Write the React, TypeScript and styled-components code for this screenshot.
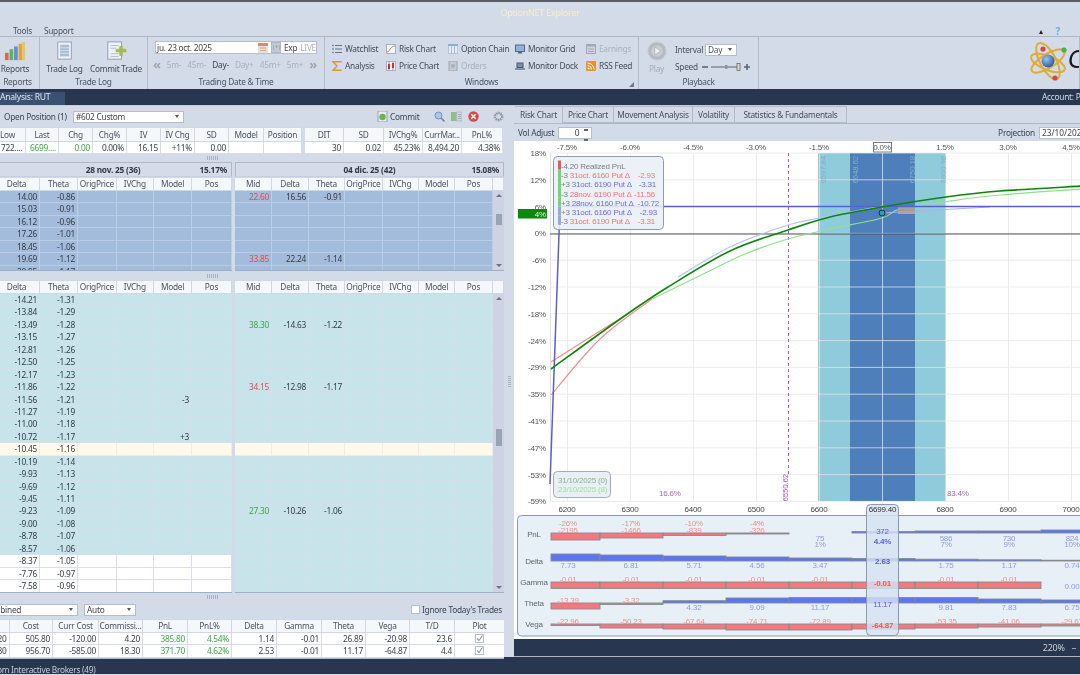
import React from "react";
import styled, { createGlobalStyle } from "styled-components";

const GlobalStyle = createGlobalStyle`
  html, body { margin: 0; padding: 0; background: #d3dae8; overflow: hidden; }
  #root { width: 1080px; height: 675px; }
  * { box-sizing: border-box; }
`;

const Frame = styled.div`
  width: 1080px; height: 675px; overflow: hidden; display: flex; flex-direction: column;
  background: #d3dae8; color: #3d4451; font: 8.3px "Noto Sans", sans-serif; letter-spacing: -0.25px; filter: blur(0.35px);
`;
const TopLine = styled.div`height: 2px; background: #5a5d66;`;
const TitleBar = styled.div`height: 23px; display: flex; align-items: center; justify-content: center; color: #f6eecb; font-size: 9px; padding-bottom: 3px;`;
const MenuBar = styled.div`height: 11px; display: flex; align-items: center; padding-left: 13px; gap: 12px; color: #4a5160;`;
const MenuRight = styled.div`margin-left: auto; display: flex; align-items: center; gap: 13px; padding-right: 20px; color: #222;`;
const Help = styled.span`color: #6fb0d8; font-weight: 700; font-size: 10px;`;
const Ribbon = styled.div`height: 53px; display: flex; border-top: 1px solid #aeb7c6;`;
const Group = styled.div<{ $w?: number }>`
  ${(p) => (p.$w ? `width: ${p.$w}px; flex: none;` : "flex: 1; min-width: 0; overflow: hidden;")}
  display: grid; grid-template-rows: 1fr 14px; border-right: 1px solid #b3bbca; position: relative;
`;
const GroupLabel = styled.div<{ $shift?: number }>`
  text-align: center; line-height: 11px; padding-top: 1px; color: #4c5361; margin-left: ${(p) => p.$shift ?? 0}px;
`;
const Bigs = styled.div<{ $shift?: number }>`display: flex; padding-top: 4px; margin-left: ${(p) => p.$shift ?? 0}px;`;
const Big = styled.div<{ $w: number; $off?: boolean }>`
  width: ${(p) => p.$w}px; display: flex; flex-direction: column; align-items: center; height: 34px;
  color: ${(p) => (p.$off ? "#a3aab7" : "#454c5a")};
  svg { height: 20px; }
  span { margin-top: 2px; white-space: nowrap; line-height: 11px; }
`;
const DateCol = styled.div`padding: 4px 7px 0 5px; display: flex; flex-direction: column; gap: 4px;`;
const DateInput = styled.div`
  height: 13px; margin-left: 2px; background: #fff; border: 1px solid #b6bfce; display: flex; align-items: center;
  padding-left: 1px; color: #444; gap: 3px;
`;
const DateText = styled.span`flex: 1;`;
const Muted = styled.span`color: #a9b1bf;`;
const StepBtn = styled.span`width: 10px; height: 11px; background: #c3c9d5; border: 1px solid #b0b7c5; color: #8a92a0; font-size: 6px; text-align: center; line-height: 9px;`;
const Steps = styled.div`display: flex; justify-content: space-between; align-items: center; height: 13px; color: #a9b1bf;`;
const Arrow = styled.span`font-size: 13px; color: #a3a7ad; font-weight: 700; line-height: 11px;`;
const Cur = styled.span`color: #3d4451;`;
const WinGrid = styled.div`
  padding: 3px 0 0 7px; display: grid; grid-template-columns: 54px 62px 67px 71px 1fr; grid-auto-rows: 17px; align-items: center;
`;
const WinItem = styled.div<{ $off?: boolean }>`
  display: flex; align-items: center; gap: 3px; color: ${(p) => (p.$off ? "#a9b1bf" : "#454c5a")}; white-space: nowrap;
  svg { width: 10px; height: 10px; flex: none; }
`;
const Corner = styled.div`position: absolute; right: 4px; bottom: 2px; width: 0; height: 0; border-left: 5px solid transparent; border-bottom: 5px solid #6f7684;`;
const PlayRow = styled.div`display: flex; padding: 4px 0 0 7px; gap: 8px;`;
const PlayCol = styled(Big)`width: 21px;`;
const Ctrls = styled.div`display: flex; flex-direction: column; gap: 4px; padding-top: 2px; color: #4a5160;`;
const CtrlRow = styled.div`display: flex; align-items: center; gap: 2px; height: 13px; white-space: nowrap;`;
const Slide = styled.span`display: flex; align-items: center; width: 50px; margin-left: 2px; svg { width: 50px; height: 10px; }`;
const LogoRow = styled.div`display: flex; margin-left: 269px; padding-top: 3px; align-items: flex-start; height: 50px; grid-row: 1 / span 2;`;
const LogoC = styled.span`font: italic 25px "Liberation Sans", sans-serif; color: #16161e; margin-top: 5px; letter-spacing: 0;`;
const Band = styled.div`height: 17px; background: #28374f; border-bottom: 1px solid #d8d48e; display: flex; color: #d5dae2; align-items: flex-end;`;
const AnaTab = styled.div`height: 13px; width: 65px; background: #3a5171; padding: 0 0 2px 0; line-height: 11px; color: #e0e6ee; font-size: 8.6px;`;
const Account = styled.div`margin-left: auto; height: 14px; width: 38px; white-space: nowrap; overflow: hidden;`;
const Main = styled.div`height: 568px; display: flex;`;
const Left = styled.div`width: 504px; flex: none; display: flex; flex-direction: column; overflow: hidden;`;
const PosBar = styled.div`height: 21px; display: flex; align-items: center; padding-left: 4px; white-space: nowrap; flex: none;`;
const PosLabel = styled.span`width: 64px; flex: none;`;
const Combo = styled.div<{ $w: number; $x?: number }>`
  width: ${(p) => p.$w}px; height: 12px; background: #fff; border: 1px solid #b4bdcc; margin-left: ${(p) => p.$x ?? 0}px; display: flex; align-items: center;
  padding: 0 4px 0 2px; justify-content: space-between; line-height: 10px; flex: none;
  &::after { content: ""; border-left: 2.5px solid transparent; border-right: 2.5px solid transparent; border-top: 3px solid #555; }
`;
const PosTool = styled.div<{ $x: number }>`margin-left: ${(p) => p.$x}px; display: flex; align-items: center; gap: 2px; flex: none; svg { width: 11px; height: 11px; }`;
const TableRow = styled.div`display: flex; gap: 3px; flex: none;`;
const DataTable = styled.div<{ $x?: number; $cols: string; $w: number }>`
  width: ${(p) => p.$w}px; margin-left: ${(p) => p.$x ?? 0}px; border-right: 1px solid #aab5c6;
  display: grid; grid-template-columns: ${(p) => p.$cols}; flex: none;
`;
const HeadCell = styled.div<{ $h?: number }>`
  height: ${(p) => p.$h ?? 15}px; background: #f5f8fb; border: 1px solid #cfd8e4; border-width: 1px 1px 1px 0; text-align: center; line-height: ${(p) => (p.$h ?? 15) - 2}px;
  color: #4c5361; white-space: nowrap; overflow: hidden;
`;
const ValCell = styled.div<{ $c?: string; $left?: boolean; $h?: number }>`
  height: ${(p) => p.$h ?? 12}px; background: #fff; border: 1px solid #d5dce6; border-width: 0 1px 1px 0; text-align: ${(p) => (p.$left ? "left" : "right")};
  line-height: ${(p) => (p.$h ?? 12) - 1}px; padding: 0 2px 0 ${(p) => (p.$left ? 11 : 0)}px; color: ${(p) => p.$c ?? "#3a3f49"}; white-space: nowrap; overflow: hidden;
`;
const Split = styled.div<{ $h: number }>`height: ${(p) => p.$h}px; display: flex; align-items: center; flex: none; padding-left: 207px;`;
const Grip = styled.i`display: block; width: 11px; height: 4px; background: repeating-linear-gradient(90deg, #aab2c1 0 1px, transparent 1px 2px);`;
const Halves = styled.div`display: flex; gap: 3px; flex: none;`;
const Half = styled.div<{ $w: number; $x?: number }>`width: ${(p) => p.$w}px; margin-left: ${(p) => p.$x ?? 0}px; flex: none; display: flex; flex-direction: column;`;
const Expiry = styled.div`
  height: 15px; background: #d5dbe8; border: 1px solid #aeb8c8; border-bottom-color: #c8d0dd; display: flex; justify-content: center; align-items: center; font-weight: 700; color: #333843; position: relative; letter-spacing: -0.2px;
`;
const ExpPct = styled.span`position: absolute; right: 4px;`;
const GridHead = styled.div<{ $cols: string }>`display: grid; grid-template-columns: ${(p) => p.$cols};`;
const GridBody = styled.div<{ $h: number }>`display: flex; height: ${(p) => p.$h}px; overflow: hidden; border-bottom: 1px solid #9fb0c6;`;
const RowsCol = styled.div`flex: 1; min-width: 0;`;
const GridRow = styled.div<{ $cols: string; $bg: string; $line: string }>`
  display: grid; grid-template-columns: ${(p) => p.$cols}; height: 12.45px; background: ${(p) => p.$bg};
  & > div { border-right: 1px solid ${(p) => p.$line}; border-bottom: 1px solid ${(p) => p.$line}; text-align: right; padding-right: 2px; line-height: 11.5px; color: #353a44; white-space: nowrap; overflow: hidden; }
`;
const RowCell = styled.div<{ $c?: string }>`${(p) => (p.$c ? `color: ${p.$c} !important;` : "")}`;
const Scroll = styled.div`width: 11px; background: #cdd3e2; display: flex; flex-direction: column; align-items: center; padding: 3px 0;`;
const ArrowUp = styled.i`border-left: 3px solid transparent; border-right: 3px solid transparent; border-bottom: 3px solid #6b7280; display: block;`;
const ArrowDown = styled.i`margin-top: auto; border-left: 3px solid transparent; border-right: 3px solid transparent; border-top: 3px solid #6b7280; display: block;`;
const Thumb = styled.i<{ $y: number; $h: number }>`display: block; width: 6px; height: ${(p) => p.$h}px; margin-top: ${(p) => p.$y}px; background: #9aa3b2;`;
const ToolRow = styled.div`height: 17px; display: flex; align-items: center; flex: none; padding-bottom: 1px; overflow: hidden;`;
const Check = styled.div`width: 9px; height: 9px; background: #fff; border: 1px solid #b4bdcc; margin-left: 275px; flex: none;`;
const CheckText = styled.span`margin-left: 2px; white-space: nowrap;`;
const PlotCell = styled(ValCell)`display: flex; align-items: center; justify-content: center; padding: 0; svg { width: 9px; height: 9px; }`;
const SumRule = styled.div`height: 1px; background: #b1bac9; flex: none;`;
const Foot = styled.div`height: 17px; background: #28374f; color: #c8ced8; flex: none; overflow: hidden; line-height: 21px; white-space: nowrap; margin-top: auto;`;
const FootText = styled.span`display: inline-block; margin-left: -28px;`;
const VSplit = styled.div`width: 10px; flex: none; display: flex; flex-direction: column; align-items: center;`;
const VMid = styled.div`flex: 1; display: flex; align-items: center;`;
const VGrip = styled.i`display: block; width: 3px; height: 11px; background: repeating-linear-gradient(0deg, #aab2c1 0 1px, transparent 1px 2px);`;
const FootFill = styled.div`height: 17px; width: 100%; background: #28374f;`;
const Right = styled.div`flex: 1; display: flex; flex-direction: column; overflow: hidden; min-width: 0;`;
const Tabs = styled.div`height: 18px; display: flex; padding-left: 1px; border-bottom: 1px solid #aab5c6; flex: none;`;
const Tab = styled.div<{ $w: number; $on?: boolean }>`
  width: ${(p) => p.$w}px; height: ${(p) => (p.$on ? 18 : 17)}px; border: 1px solid #b1bbca; border-left-width: 0; text-align: center; line-height: 15px; color: #464d5b; white-space: nowrap; background: #d3dae8;
`;
const VolRow = styled.div`height: 17px; display: flex; align-items: center; padding-left: 4px; flex: none; white-space: nowrap;`;
const Spin = styled.div`width: 34px; height: 12px; margin-left: 4px; background: #fff; border: 1px solid #b7c0ce; text-align: right; line-height: 10px; padding-right: 12px; position: relative;
  &::after { content: ""; position: absolute; right: 3px; top: 1px; width: 4px; height: 8px; border-top: 2px solid #666; border-bottom: 2px solid #666; }
`;
const ProjLabel = styled.span`margin-left: auto;`;
const ProjInput = styled.div`width: 60px; height: 12px; margin-left: 4px; margin-right: -19px; background: #fff; border: 1px solid #b7c0ce; line-height: 10px; padding-left: 2px; flex: none; letter-spacing: 0;`;
const ChartSvg = styled.svg`display: block; flex: none; width: 567px; height: 498px; font-family: "Liberation Sans", sans-serif; letter-spacing: -0.2px;`;
const ZoomBar = styled.div`height: 17px; background: #28374f; color: #c9ced7; display: flex; align-items: center; justify-content: flex-end; gap: 7px; padding-right: 4px; flex: none; font-size: 9px; margin-left: -1px;`;
const RFootLine = styled.div`height: 1px; background: #aeb6c2; flex: none;`;

const RED = "#e64a4e";
const GREEN = "#3ea644";
const leftCols = "46px 38px 38.7px 37.3px 38px 40px";
const rightCols = "37px 37px 36px 37.7px 36.3px 36px 38px";
const headNames = ["Delta", "Theta", "OrigPrice", "IVChg", "Model", "Pos"];
const rightHead = ["Mid", "Delta", "Theta", "OrigPrice", "IVChg", "Model", "Pos"];

type Row = { d: string; t: string; model?: string; mid?: string; md?: string; mt?: string; c?: string };
const topRows: Row[] = [
  { d: "14.00", t: "-0.86", mid: "22.60", md: "16.56", mt: "-0.91", c: RED },
  { d: "15.03", t: "-0.91" }, { d: "16.12", t: "-0.96" }, { d: "17.26", t: "-1.01" }, { d: "18.45", t: "-1.06" },
  { d: "19.69", t: "-1.12", mid: "33.85", md: "22.24", mt: "-1.14", c: RED },
  { d: "20.95", t: "-1.17" },
];
const lowRows: Row[] = [
  { d: "-14.21", t: "-1.31" }, { d: "-13.84", t: "-1.29" },
  { d: "-13.49", t: "-1.28", mid: "38.30", md: "-14.63", mt: "-1.22", c: GREEN },
  { d: "-13.15", t: "-1.27" }, { d: "-12.81", t: "-1.26" }, { d: "-12.50", t: "-1.25" }, { d: "-12.17", t: "-1.23" },
  { d: "-11.86", t: "-1.22", mid: "34.15", md: "-12.98", mt: "-1.17", c: RED },
  { d: "-11.56", t: "-1.21", model: "-3" }, { d: "-11.27", t: "-1.19" }, { d: "-11.00", t: "-1.18" },
  { d: "-10.72", t: "-1.17", model: "+3" }, { d: "-10.45", t: "-1.16" }, { d: "-10.19", t: "-1.14" },
  { d: "-9.93", t: "-1.13" }, { d: "-9.69", t: "-1.12" }, { d: "-9.45", t: "-1.11" },
  { d: "-9.23", t: "-1.09", mid: "27.30", md: "-10.26", mt: "-1.06", c: GREEN },
  { d: "-9.00", t: "-1.08" }, { d: "-8.78", t: "-1.07" }, { d: "-8.57", t: "-1.06" },
  { d: "-8.37", t: "-1.05" }, { d: "-7.76", t: "-0.97" }, { d: "-7.58", t: "-0.96" },
];

const cellsLeft = (r: Row) => (
  <>
    <RowCell>{r.d}</RowCell><RowCell>{r.t}</RowCell><RowCell /><RowCell /><RowCell>{r.model}</RowCell><RowCell />
  </>
);
const cellsRight = (r: Row) => (
  <>
    <RowCell $c={r.c}>{r.mid}</RowCell><RowCell>{r.md}</RowCell><RowCell>{r.mt}</RowCell><RowCell /><RowCell /><RowCell /><RowCell />
  </>
);

const lowStyle = (i: number, side: "l" | "r") => {
  if (i === 12) return { bg: "#fff9ec", line: "#f1ece0" };
  if (side === "l" && i > 20) return { bg: "#ffffff", line: "#d9dfea" };
  return { bg: "#c6e4ea", line: "#d3dfe9" };
};

const GridPair = ({ rows, h, kind, thumbY, thumbH, expiry }: { rows: Row[]; h: number; kind: "top" | "low"; thumbY: number; thumbH: number; expiry?: boolean }) => (
  <Halves>
    <Half $w={238} $x={-6}>
      {expiry && <Expiry>28 nov. 25 (36)<ExpPct>15.17%</ExpPct></Expiry>}
      <GridHead $cols={leftCols}>{headNames.map((n) => <HeadCell key={n} $h={14}>{n}</HeadCell>)}</GridHead>
      <GridBody $h={h}>
        <RowsCol>
          {rows.map((r, i) => {
            const s = kind === "top" ? { bg: "#a4bcdc", line: "#bacde4" } : lowStyle(i, "l");
            return <GridRow key={i} $cols={leftCols} $bg={s.bg} $line={s.line}>{cellsLeft(r)}</GridRow>;
          })}
        </RowsCol>
      </GridBody>
    </Half>
    <Half $w={269}>
      {expiry && <Expiry>04 dic. 25 (42)<ExpPct>15.08%</ExpPct></Expiry>}
      <GridHead $cols={rightCols + " 11px"}>
        {rightHead.map((n) => <HeadCell key={n} $h={14}>{n}</HeadCell>)}
        <HeadCell $h={14} />
      </GridHead>
      <GridBody $h={h}>
        <RowsCol>
          {rows.map((r, i) => {
            const s = kind === "top" ? { bg: "#a4bcdc", line: "#bacde4" } : lowStyle(i, "r");
            return <GridRow key={i} $cols={rightCols} $bg={s.bg} $line={s.line}>{cellsRight(r)}</GridRow>;
          })}
        </RowsCol>
        <Scroll><ArrowUp /><Thumb $y={thumbY} $h={thumbH} /><ArrowDown /></Scroll>
      </GridBody>
    </Half>
  </Halves>
);

/* --------- icons ---------- */
const ReportsIcon = () => (
  <svg viewBox="0 0 24 22" width="22">
    <rect x="1" y="13" width="4" height="8" fill="#e2624e" /><rect x="6" y="9" width="4" height="12" fill="#5cb45c" />
    <rect x="11" y="6" width="4" height="15" fill="#5b8fd6" /><rect x="16" y="3" width="4" height="18" fill="#e4a33a" /><rect x="20" y="1" width="3" height="20" fill="#e5c958" />
  </svg>
);
const DocIcon = () => (
  <svg viewBox="0 0 20 22" width="18">
    <rect x="2" y="1" width="15" height="19" fill="#eef2f8" stroke="#8d9ab0" />
    <rect x="4.5" y="4" width="10" height="13" fill="#a9bcd6" /><path d="M4.5 7.5h10M4.5 10.5h10M4.5 13.5h10" stroke="#dbe3ef" />
  </svg>
);
const CommitIcon = () => (
  <svg viewBox="0 0 24 22" width="22">
    <rect x="3" y="1" width="15" height="19" fill="#eef2f8" stroke="#8d9ab0" />
    <path d="M6 5h9M6 8h6M6 14h9M6 17h9" stroke="#a9bcd6" />
    <path d="M12 9h4v-3h3v3h4v3h-4v4h-3v-4h-4z" fill="#9cc24c" stroke="#c2a13a" strokeWidth=".6" />
  </svg>
);
const CalIcon = () => (
  <svg viewBox="0 0 10 10" width="10" height="10" style={{ flex: "none" }}>
    <rect width="10" height="10" fill="#dde3ec" /><rect width="10" height="3" fill="#e28a5a" /><path d="M2 5h6M2 7.5h6" stroke="#e2a27e" />
  </svg>
);
const ListIcon = () => <svg viewBox="0 0 10 10"><path d="M0 1.5h2M0 5h2M0 8.5h2" stroke="#6f9bc8" strokeWidth="1.4" /><path d="M3 1.5h7M3 5h7M3 8.5h7" stroke="#6a7280" /></svg>;
const SigmaIcon = () => <svg viewBox="0 0 10 10"><path d="M9 1.5V.7H1l4 4.3-4 4.3h8v-.9" fill="none" stroke="#d89a35" strokeWidth="1.4" /></svg>;
const RiskIcon = () => <svg viewBox="0 0 10 10"><rect x=".5" y=".5" width="9" height="9" fill="#f3f6fa" stroke="#a8b2c2" /><path d="M1 8C4 8 4 2 9 2" fill="none" stroke="#d08a4a" /></svg>;
const PriceIcon = () => <svg viewBox="0 0 10 10"><rect x=".5" y=".5" width="9" height="9" fill="#f3f6fa" stroke="#a8b2c2" /><rect x="2" y="3" width="2" height="5" fill="#d33" /><rect x="6" y="2" width="2" height="5" fill="#d33" /><path d="M3 1v8M7 1v8" stroke="#933" strokeWidth=".6" /></svg>;
const ChainIcon = () => <svg viewBox="0 0 10 10"><rect x=".5" y=".5" width="9" height="9" fill="#e6edf6" stroke="#b4c4d9" /><path d="M3.5 0v10M6.5 0v10" stroke="#9db8d8" /><rect x="0" y="0" width="10" height="2" fill="#8fb0d6" /></svg>;
const OrdersIcon = () => <svg viewBox="0 0 10 10"><rect x="1" y="0" width="8" height="10" fill="#c5cad3" stroke="#9fa6b3" /><circle cx="5" cy="5" r="2" fill="#a9aeb8" /></svg>;
const MonGrid = () => <svg viewBox="0 0 10 10"><rect x=".5" y="1" width="9" height="6.5" fill="#8fb3de" stroke="#59677d" /><rect x="3" y="8" width="4" height="1.5" fill="#59677d" /></svg>;
const MonDock = () => <svg viewBox="0 0 10 10"><rect x="2" y="2" width="6" height="4.5" fill="#7d8ea6" stroke="#4e5a6d" /><path d="M0 8h10" stroke="#69758a" strokeWidth="1.4" /></svg>;
const EarnIcon = () => <svg viewBox="0 0 10 10"><rect x=".5" y=".5" width="9" height="9" fill="#cfd3db" stroke="#a2a8b4" /><rect width="10" height="2.5" fill="#a2a8b4" /><path d="M2 5h6M2 7.5h6" stroke="#a2a8b4" /></svg>;
const RssIcon = () => <svg viewBox="0 0 10 10"><rect width="10" height="10" rx="1" fill="#e8912d" /><circle cx="2.5" cy="7.5" r="1.1" fill="#fff" /><path d="M1.5 4.5a4 4 0 0 1 4 4M1.5 2a6.5 6.5 0 0 1 6.5 6.5" fill="none" stroke="#fff" /></svg>;
const PlayIcon = () => (
  <svg viewBox="0 0 22 22" width="20"><circle cx="11" cy="11" r="10" fill="#b6b9bf" stroke="#c8cbd0" /><circle cx="11" cy="11" r="6.4" fill="#c9ccd2" /><path d="M8.5 6.5l6.5 4.5-6.5 4.5z" fill="#eceef1" stroke="#9ea2a9" strokeWidth=".6" /></svg>
);
const Atom = () => (
  <svg viewBox="0 0 40 42" width="40" height="42" style={{ flex: "none" }}>
    <defs><radialGradient id="sph" cx=".38" cy=".35" r=".7"><stop offset="0" stopColor="#9cc4ee" /><stop offset="1" stopColor="#26549a" /></radialGradient></defs>
    <g fill="none" stroke="#dcae38" strokeWidth="2">
      <ellipse cx="20" cy="21" rx="8" ry="20" transform="rotate(-28 20 21)" />
      <ellipse cx="20" cy="21" rx="19" ry="7" transform="rotate(-32 20 21)" />
      <ellipse cx="20" cy="23" rx="7" ry="18" transform="rotate(-68 20 23)" />
    </g>
    <circle cx="20" cy="21" r="6.5" fill="url(#sph)" />
    <circle cx="15" cy="9" r="2.6" fill="#d9463f" /><circle cx="36" cy="10" r="2.6" fill="#46b24a" /><circle cx="27" cy="38" r="2.6" fill="#d9463f" />
  </svg>
);
const CommitSm = () => <svg viewBox="0 0 11 11"><rect x="1" y="0" width="9" height="11" fill="#e7ebf1" stroke="#98a2b2" /><circle cx="5.5" cy="6" r="3.2" fill="#6db34c" /></svg>;
const Mag = () => <svg viewBox="0 0 11 11"><circle cx="4.5" cy="4.5" r="3.5" fill="#a8c8e8" stroke="#6f97c2" /><path d="M7 7l3.5 3.5" stroke="#7a8596" strokeWidth="1.6" /></svg>;
const BookIc = () => <svg viewBox="0 0 11 11"><rect x="0" y="1" width="5.5" height="9" fill="#8fc08a" /><rect x="5.5" y="1" width="5.5" height="9" fill="#cdd4de" stroke="#9aa3b2" strokeWidth=".5" /><path d="M7 3.5h3M7 5.5h3M7 7.5h3" stroke="#8893a5" strokeWidth=".6" /></svg>;
const RedX = () => <svg viewBox="0 0 11 11"><circle cx="5.5" cy="5.5" r="5.2" fill="#d84848" /><path d="M3.3 3.3l4.4 4.4M7.7 3.3l-4.4 4.4" stroke="#fff" strokeWidth="1.5" /></svg>;
const Gear = () => <svg viewBox="0 0 11 11"><circle cx="5.5" cy="5.5" r="3.4" fill="none" stroke="#8b93a2" strokeWidth="2" strokeDasharray="1.6 .6" /><circle cx="5.5" cy="5.5" r="4.8" fill="none" stroke="#a9b0bd" strokeWidth=".8" strokeDasharray="1.6 1.4" /></svg>;
const Tick = () => <svg viewBox="0 0 9 9"><rect x=".5" y=".5" width="8" height="8" fill="#fff" stroke="#b8c0cc" /><path d="M2 4.5l2 2 3.5-5" fill="none" stroke="#8d95a3" strokeWidth="1.1" /></svg>;
const SliderSvg = () => (
  <svg viewBox="0 0 50 10">
    <path d="M0 5h6M1.5 5" stroke="#5d6573" strokeWidth="1.6" /><path d="M9 5h28" stroke="#7d8593" strokeWidth="1.4" /><rect x="23" y="3" width="2.5" height="4" fill="#8e95a2" />
    <rect x="35" y="1.5" width="3" height="7" fill="#dfd9b5" stroke="#555c68" strokeWidth=".7" />
    <path d="M42 5h6M45 2v6" stroke="#5d6573" strokeWidth="1.6" />
  </svg>
);

/* --------- chart ---------- */
type P = [number, number];
const smooth = (pts: P[]) => {
  let d = `M${pts[0][0]} ${pts[0][1]}`;
  for (let i = 0; i < pts.length - 1; i++) {
    const p0 = pts[i - 1] ?? pts[i], p1 = pts[i], p2 = pts[i + 1], p3 = pts[i + 2] ?? p2;
    d += `C${p1[0] + (p2[0] - p0[0]) / 6} ${p1[1] + (p2[1] - p0[1]) / 6} ${p2[0] - (p3[0] - p1[0]) / 6} ${p2[1] - (p3[1] - p1[1]) / 6} ${p2[0]} ${p2[1]}`;
  }
  return d;
};
const yLabels = ["18%", "12%", "6%", "0%", "-6%", "-12%", "-18%", "-24%", "-29%", "-35%", "-41%", "-47%", "-53%", "-59%"];
const pct = ["-7.5%", "-6.0%", "-4.5%", "-3.0%", "-1.5%", "0.0%", "1.5%", "3.0%", "4.5%"];
const prices = ["6200", "6300", "6400", "6500", "6600", "", "6800", "6900", "7000"];
const xs = Array.from({ length: 9 }, (_, i) => 567 + 63 * i);
const ys = yLabels.map((_, i) => 154 + 26.8 * i);
const darkGreen: P[] = [[551, 370], [623, 318], [668, 288], [730, 252], [788, 231], [830, 218], [882, 208], [946, 198], [1000, 192], [1082, 187]];
const lightGreen: P[] = [[652, 300], [693, 280], [745, 255], [788, 240], [830, 230], [882, 219], [900, 210], [950, 202], [1000, 196], [1082, 190]];
const lightBlue: P[] = [[678, 278], [730, 248], [788, 226], [825, 218], [882, 207]];
const redLow: P[] = [[551, 396], [600, 340], [652, 300]];
const redHigh: P[] = [[551, 363], [600, 332], [623, 318]];

const legend = [
  { bar: "#e85a5a", q: "", name: "-4.20 Realized PnL", val: "", c: "#7a7f88", vx: 655 },
  { bar: "#6fd86f", q: "-3 ", name: "31oct. 6160 Put Δ", val: "-2.93", c: "#f47575", vx: 655 },
  { bar: "#6fd86f", q: "+3 ", name: "31oct. 6190 Put Δ", val: "-3.31", c: "#6c6cf0", vx: 656 },
  { bar: "#6fd86f", q: "-3 ", name: "28nov. 6190 Put Δ", val: "-11.56", c: "#f47575", vx: 655 },
  { bar: "#6fd86f", q: "+3 ", name: "28nov. 6160 Put Δ", val: "-10.72", c: "#6c6cf0", vx: 659 },
  { bar: "#8fa8ee", q: "+3 ", name: "31oct. 6160 Put Δ", val: "-2.93", c: "#6c6cf0", vx: 657 },
  { bar: "#8fa8ee", q: "-3 ", name: "31oct. 6190 Put Δ", val: "-3.31", c: "#f47575", vx: 655 },
];

const colX = [551, 600, 663, 726, 789, 852, 915, 978, 1041, 1090];
const bars = [
  { label: "PnL", y: 535, base: 534, v: [-7, -5, -2.5, -1, 0, 1.5, 2, 2, 3] },
  { label: "Delta", y: 562, base: 562, v: [7, 6, 5, 4, 3, 2.5, 1.8, 1.2, 0.8] },
  { label: "Gamma", y: 583, base: 583, v: [-6.5, -6.5, -6.5, -6.5, -6.5, -6.5, -6.5, -6.5, 0] },
  { label: "Theta", y: 604, base: 604, v: [-6, -1.5, 2.3, 5, 5.5, 5.5, 5.5, 4, 3] },
  { label: "Vega", y: 625, base: 625, v: [-1.5, -4, -5, -6, -6, -5, -4, -3, -2] },
];
const cx = [568, 631, 694, 757, 820, 883, 946, 1009, 1072];
const REDT = "#f28c8e";
const BLUET = "#8d98f2";
const vals: { x: number; y: number; t: string; c: string }[] = [
  ...["-26%", "-17%", "-10%", "-4%"].map((t, i) => ({ x: cx[i], y: 527, t, c: REDT })),
  ...["-2195", "-1466", "-839", "-326"].map((t, i) => ({ x: cx[i], y: 534, t, c: REDT })),
  ...[[4, "75", "1%"], [6, "586", "7%"], [7, "730", "9%"], [8, "824", "10%"]].flatMap(([i, a, b]) => [
    { x: cx[i as number], y: 542, t: a as string, c: BLUET }, { x: cx[i as number], y: 548, t: b as string, c: BLUET },
  ]),
  ...[[0, "7.73"], [1, "6.81"], [2, "5.71"], [3, "4.56"], [4, "3.47"], [6, "1.75"], [7, "1.17"], [8, "0.74"]].map(([i, t]) => ({ x: cx[i as number], y: 569, t: t as string, c: BLUET })),
  ...[0, 1, 2, 3, 4, 6, 7].map((i) => ({ x: cx[i], y: 583, t: "-0.01", c: REDT })),
  { x: cx[8], y: 590, t: "0.00", c: BLUET },
  { x: cx[0], y: 604, t: "-13.39", c: REDT }, { x: cx[1], y: 604, t: "-3.32", c: REDT },
  ...[[2, "4.32"], [3, "9.09"], [4, "11.17"], [6, "9.81"], [7, "7.83"], [8, "6.75"]].map(([i, t]) => ({ x: cx[i as number], y: 611, t: t as string, c: BLUET })),
  ...[[0, "-22.96"], [1, "-50.23"], [2, "-67.64"], [3, "-74.71"], [4, "-72.89"], [6, "-53.35"], [7, "-41.06"], [8, "-29.67"]].map(([i, t]) => ({ x: cx[i as number], y: 625, t: t as string, c: REDT })),
];

const FS = "8";

const RiskChart = () => (
  <ChartSvg viewBox="514 142 567 498">
    <rect x="514" y="142" width="567" height="498" fill="#fff" />
    <rect x="818" y="154" width="128" height="348" fill="#90cbdc" />
    <rect x="850" y="154" width="65" height="348" fill="#4f7fbb" />
    {ys.map((y) => <path key={y} d={`M550 ${y}H1081`} stroke="#e6e6e6" strokeOpacity=".75" />)}
    {xs.map((x) => <path key={x} d={`M${x + 0.5} 154V502`} stroke="#e6e6e6" strokeOpacity=".75" />)}
    <path d="M550.5 154V502" stroke="#e2e2e2" />
    {[["6597.84", 826], ["6648.62", 858], ["6750.18", 915], ["6800.96", 946]].map(([t, x]) => (
      <text key={t} transform={`rotate(-90 ${x} 157)`} x={x} y="157" textAnchor="end" fontSize={FS} fill="#7fb0d0">{t}</text>
    ))}
    {yLabels.map((l, i) => <text key={l} x="546" y={ys[i] + 3} textAnchor="end" fontSize={FS} fill="#555">{l}</text>)}
    {pct.map((l, i) => <text key={l} x={xs[i]} y="151" textAnchor="middle" fontSize={FS} fill="#555">{l}</text>)}
    <rect x="873.5" y="143.5" width="18" height="9.5" fill="none" stroke="#6f7e94" />
    {prices.map((l, i) => <text key={i} x={xs[i]} y="513" textAnchor="middle" fontSize={FS} fill="#444">{l}</text>)}
    <path d="M788.5 154V475" stroke="#c04fc0" strokeDasharray="3 3" />
    <text transform="rotate(-90 788 475)" x="788" y="475" textAnchor="end" fontSize={FS} fill="#b04fb0">6550.62</text>
    <text x="659" y="497" fontSize={FS} fill="#b75fb7">16.6%</text>
    <text x="947" y="497" fontSize={FS} fill="#b75fb7">83.4%</text>
    <path d="M550 235H1081" stroke="#4e4e4e" strokeOpacity=".65" strokeWidth="1.6" />
    <path d={smooth(redLow)} fill="none" stroke="#f58a8a" strokeWidth="1.1" />
    <path d={smooth(redHigh)} fill="none" stroke="#f58a8a" strokeWidth="1.1" />
    <path d={smooth(lightBlue)} fill="none" stroke="#b4c4f4" strokeWidth="1.2" />
    <path d={smooth(lightGreen)} fill="none" stroke="#8fe08f" strokeWidth="1.2" />
    <path d="M882 214L990 208" stroke="#a8b4ee" fill="none" />
    <rect x="898" y="208" width="17" height="3.5" fill="#9ea59c" /><rect x="898" y="211.5" width="17" height="3.5" fill="#c19ba0" />
    <path d="M560 207.5H1081M550 485L560 207.5" stroke="#5a5fd0" strokeWidth="1.5" fill="none" />
    <path d={smooth(darkGreen)} fill="none" stroke="#0b860b" strokeWidth="1.6" />
    <circle cx="882" cy="214" r="3" fill="#22a6a6" stroke="#123" strokeWidth=".9" />
    <rect x="518" y="210" width="29" height="9.5" fill="#0a8a0a" />
    <text x="546" y="218" textAnchor="end" fontSize={FS} fill="#e6f4e6">4%</text>
    <rect x="553.5" y="157.5" width="110" height="73" rx="4" fill="#e9eff5" fillOpacity=".9" stroke="#8d9bb0" />
    {legend.map((l, i) => {
      const y = 170 + i * 9.2;
      return (
        <g key={i} fontSize={FS}>
          <rect x="558" y={y - 8.5} width="3" height="9.2" fill={l.bar} />
          <text x="561" y={y}><tspan fill="#7a7f88">{l.q}</tspan><tspan fill={l.c}>{l.name}</tspan></text>
          {l.val && <text x={l.vx} y={y} textAnchor="end" fill={l.c}>{l.val}</text>}
        </g>
      );
    })}
    <rect x="553.5" y="472.5" width="57" height="26" rx="4" fill="#e9eff5" stroke="#a0acbd" />
    <text x="558" y="484" fontSize={FS} fill="#86b78e">31/10/2025 (0)</text>
    <text x="558" y="493" fontSize={FS} fill="#9ee09e">23/10/2025 (8)</text>

    <rect x="517.5" y="516.5" width="600" height="120.5" rx="4" fill="#e8f0f7" stroke="#8d99ab" />
    {bars.map((r) => (
      <g key={r.label}>
        <text x="534" y={r.y + 3} textAnchor="middle" fontSize={FS} fill="#5f6570">{r.label}</text>
        {r.v.map((v, i) => (
          <rect key={i} x={colX[i]} width={colX[i + 1] - colX[i]} y={v > 0 ? r.base - v : r.base} height={Math.abs(v)}
            fill={v > 0 ? "#5b76f0" : "#f27a7e"} stroke="#858a90" strokeWidth=".9" />
        ))}
      </g>
    ))}
    {vals.map((v, i) => <text key={i} x={v.x} y={v.y} textAnchor="middle" fontSize={FS} fill={v.c}>{v.t}</text>)}
    <rect x="866.5" y="505.5" width="32" height="131" rx="4" fill="#d7e2f1" fillOpacity=".82" stroke="#8c98ab" />
    <text x="882.5" y="513" textAnchor="middle" fontSize={FS} fill="#333">6699.40</text>
    <text x="882.5" y="535" textAnchor="middle" fontSize={FS} fill="#5a5cf0">372</text>
    <text x="882.5" y="545" textAnchor="middle" fontSize={FS} fontWeight="700" fill="#5a5cf0">4.4%</text>
    <text x="882.5" y="565" textAnchor="middle" fontSize={FS} fontWeight="700" fill="#5a5cf0">2.63</text>
    <text x="882.5" y="587" textAnchor="middle" fontSize={FS} fontWeight="700" fill="#ee5a5e">-0.01</text>
    <text x="882.5" y="608" textAnchor="middle" fontSize={FS} fill="#5a5cf0">11.17</text>
    <text x="882.5" y="629" textAnchor="middle" fontSize={FS} fontWeight="700" fill="#ee5a5e">-64.87</text>
  </ChartSvg>
);

const t1Left = "36px 33px 34px 34px 34px 34px 34px 35px 38px";
const t1Right = "39px 40px 39px 39px 41px";
const t3Cols = "19.5px 43.5px 46px 44px 45px 44px 45px 45px 44px 44px 45px 50px";
const t3Head = ["", "Cost", "Curr Cost", "Commissi...", "PnL", "PnL%", "Delta", "Gamma", "Theta", "Vega", "T/D", "Plot"];
const t3Rows = [
  ["20", "505.80", "-120.00", "4.20", "385.80", "4.54%", "1.14", "-0.01", "26.89", "-20.98", "23.6"],
  ["80", "956.70", "-585.00", "18.30", "371.70", "4.62%", "2.53", "-0.01", "11.17", "-64.87", "4.4"],
];

export default function App() {
  return (
    <Frame>
      <GlobalStyle />
      <TopLine />
      <TitleBar>OptionNET Explorer</TitleBar>
      <MenuBar>
        <span>Tools</span><span>Support</span>
        <MenuRight><span>▴</span><Help>?</Help></MenuRight>
      </MenuBar>
      <Ribbon>
        <Group $w={40}>
          <Bigs $shift={-5}><Big $w={40}><ReportsIcon /><span>Reports</span></Big></Bigs>
          <GroupLabel $shift={-4}>Reports</GroupLabel>
        </Group>
        <Group $w={108}>
          <Bigs><Big $w={49}><DocIcon /><span>Trade Log</span></Big><Big $w={54}><CommitIcon /><span>Commit Trade</span></Big></Bigs>
          <GroupLabel>Trade Log</GroupLabel>
        </Group>
        <Group $w={177}>
          <DateCol>
            <DateInput>
              <DateText>ju. 23 oct. 2025</DateText><CalIcon /><StepBtn>|+|</StepBtn><span>Exp</span><Muted>LIVE</Muted>
            </DateInput>
            <Steps>
              <Arrow>«</Arrow><span>5m-</span><span>45m-</span><Cur>Day-</Cur><span>Day+</span><span>45m+</span><span>5m+</span><Arrow>»</Arrow>
            </Steps>
          </DateCol>
          <GroupLabel>Trading Date &amp; Time</GroupLabel>
        </Group>
        <Group $w={314}>
          <WinGrid>
            <WinItem><ListIcon />Watchlist</WinItem>
            <WinItem><RiskIcon />Risk Chart</WinItem>
            <WinItem><ChainIcon />Option Chain</WinItem>
            <WinItem><MonGrid />Monitor Grid</WinItem>
            <WinItem $off><EarnIcon />Earnings</WinItem>
            <WinItem><SigmaIcon />Analysis</WinItem>
            <WinItem><PriceIcon />Price Chart</WinItem>
            <WinItem $off><OrdersIcon />Orders</WinItem>
            <WinItem><MonDock />Monitor Dock</WinItem>
            <WinItem><RssIcon />RSS Feed</WinItem>
          </WinGrid>
          <GroupLabel>Windows</GroupLabel>
          <Corner />
        </Group>
        <Group $w={120}>
          <PlayRow>
            <PlayCol $w={21} $off><PlayIcon /><span>Play</span></PlayCol>
            <Ctrls>
              <CtrlRow>Interval<Combo $w={32}>Day</Combo></CtrlRow>
              <CtrlRow>Speed<Slide><SliderSvg /></Slide></CtrlRow>
            </Ctrls>
          </PlayRow>
          <GroupLabel>Playback</GroupLabel>
        </Group>
        <Group>
          <LogoRow><Atom /><LogoC>C</LogoC></LogoRow>
        </Group>
      </Ribbon>
      <Band>
        <AnaTab>Analysis: RUT</AnaTab>
        <Account>Account: P</Account>
      </Band>
      <Main>
        <Left>
          <PosBar>
            <PosLabel>Open Position (1)</PosLabel><Combo $w={111} $x={5}>#602 Custom</Combo>
            <PosTool $x={193}><CommitSm />Commit</PosTool>
            <PosTool $x={15}><Mag /></PosTool>
            <PosTool $x={6}><BookIc /></PosTool>
            <PosTool $x={6}><RedX /></PosTool>
            <PosTool $x={14}><Gear /></PosTool>
          </PosBar>
          <TableRow>
            <DataTable $x={-10} $w={312} $cols={t1Left}>
              {["Low", "Last", "Chg", "Chg%", "IV", "IV Chg", "SD", "Model", "Position"].map((h) => <HeadCell key={h}>{h}</HeadCell>)}
              <ValCell $left>722....</ValCell><ValCell $c={GREEN}>6699....</ValCell><ValCell $c={GREEN}>0.00</ValCell><ValCell>0.00%</ValCell>
              <ValCell>16.15</ValCell><ValCell>+11%</ValCell><ValCell>0.00</ValCell><ValCell /><ValCell />
            </DataTable>
            <DataTable $w={198} $cols={t1Right}>
              {["DIT", "SD", "IVChg%", "CurrMar...", "PnL%"].map((h) => <HeadCell key={h}>{h}</HeadCell>)}
              <ValCell>30</ValCell><ValCell>0.02</ValCell><ValCell>45.23%</ValCell><ValCell>8,494.20</ValCell><ValCell>4.38%</ValCell>
            </DataTable>
          </TableRow>
          <Split $h={8}><Grip /></Split>
          <GridPair rows={topRows} h={80} kind="top" thumbY={17} thumbH={11} expiry />
          <Split $h={9}><Grip /></Split>
          <GridPair rows={lowRows} h={298.5} kind="low" thumbY={129} thumbH={17} />
          <Split $h={9}><Grip /></Split>
          <ToolRow>
            <Combo $w={98} $x={-20}>Combined</Combo>
            <Combo $w={52} $x={6}>Auto</Combo>
            <Check />
            <CheckText>Ignore Today's Trades</CheckText>
          </ToolRow>
          <DataTable $x={-10} $w={514} $cols={t3Cols}>
            {t3Head.map((h, i) => <HeadCell key={i} $h={14}>{h}</HeadCell>)}
            {t3Rows.map((r) => (
              <React.Fragment key={r[0]}>
                {r.map((v, i) => <ValCell key={i} $h={12.5} $c={i === 4 || i === 5 ? GREEN : undefined}>{v}</ValCell>)}
                <PlotCell $h={12.5}><Tick /></PlotCell>
              </React.Fragment>
            ))}
          </DataTable>
          <SumRule />
          <Foot><FootText>Data from Interactive Brokers (49)</FootText></Foot>
        </Left>
        <VSplit><VMid><VGrip /></VMid><FootFill /></VSplit>
        <Right>
          <Tabs>
            <Tab $w={48} $on>Risk Chart</Tab><Tab $w={51}>Price Chart</Tab><Tab $w={79}>Movement Analysis</Tab><Tab $w={42}>Volatility</Tab><Tab $w={112}>Statistics &amp; Fundamentals</Tab>
          </Tabs>
          <VolRow>
            Vol Adjust<Spin>0</Spin>
            <ProjLabel>Projection</ProjLabel><ProjInput>23/10/2025</ProjInput>
          </VolRow>
          <RiskChart />
          <ZoomBar><span>220%</span><span>–</span></ZoomBar>
          <RFootLine />
          <ZoomBar />
        </Right>
      </Main>
    </Frame>
  );
}
